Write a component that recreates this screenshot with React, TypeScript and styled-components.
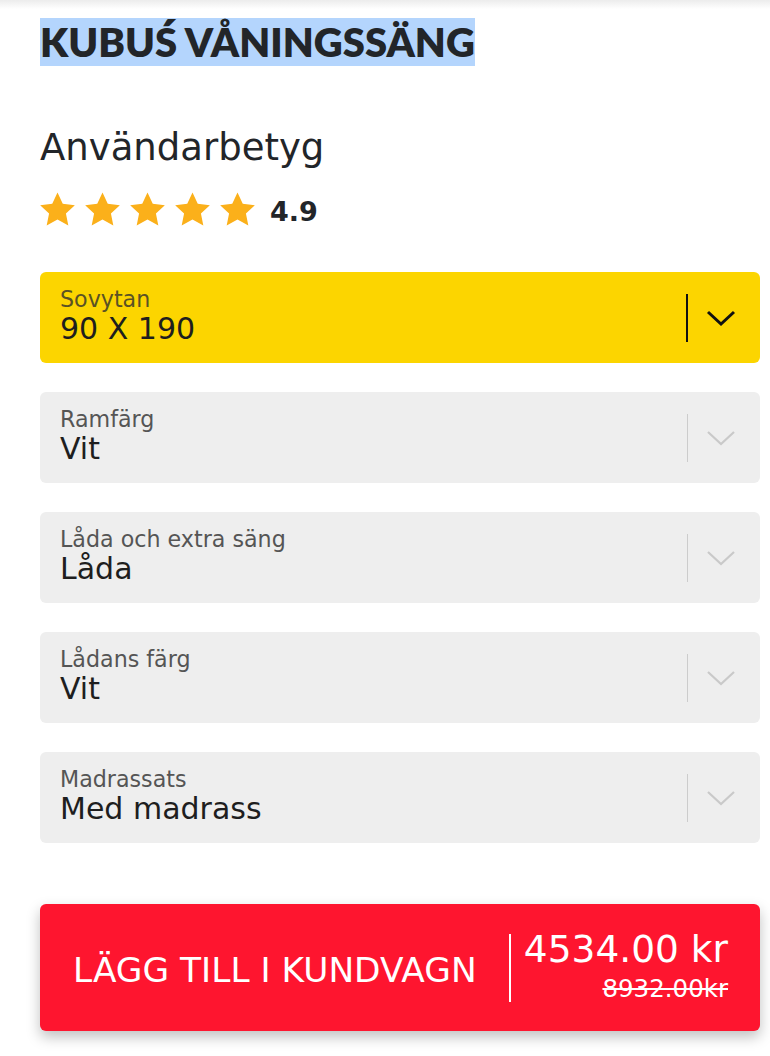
import React from 'react';
import styled, { createGlobalStyle } from 'styled-components';

const GlobalStyle = createGlobalStyle`
  body {
    margin: 0;
    background: #ffffff;
    font-family: 'DejaVu Sans', 'Lato', sans-serif;
    color: #222529;
  }
`;

const Page = styled.div`
  width: 770px;
  min-height: 1056px;
  background: linear-gradient(#ececec 0px, #ffffff 9px);
  padding: 18px 10px 0 40px;
  box-sizing: border-box;
`;

const Title = styled.h1`
  margin: 0;
  display: inline-block;
  background: #b4d5fd;
  font-family: 'Lato', 'DejaVu Sans', sans-serif;
  font-size: 40px;
  font-weight: 800;
  line-height: 48px;
  color: #222529;
`;

const Heading = styled.h2`
  margin: 58px 0 0;
  font-size: 37px;
  font-weight: 400;
  line-height: 48px;
  color: #222529;
`;

const RatingRow = styled.div`
  display: flex;
  align-items: center;
  margin-top: 18px;
`;

const Stars = styled.div`
  display: flex;
  gap: 10px;
`;

const Score = styled.span`
  margin: 6px 0 0 15px;
  font-size: 27px;
  font-weight: 700;
  color: #222529;
`;

const Options = styled.div`
  display: flex;
  flex-direction: column;
  gap: 29px;
  margin-top: 45px;
`;

const Select = styled.div<{ $active?: boolean }>`
  height: 91px;
  border-radius: 6px;
  background: ${(p) => (p.$active ? '#fcd500' : '#eeeeee')};
  display: flex;
  align-items: center;
  padding: 0 24px 0 20px;
`;

const SelectText = styled.div`
  flex: 1;
  display: flex;
  flex-direction: column;
  margin-top: -4px;
`;

const Label = styled.span<{ $active?: boolean }>`
  font-size: 22.2px;
  line-height: 26px;
  color: ${(p) => (p.$active ? '#5a5224' : '#555555')};
`;

const Value = styled.span`
  font-size: 30px;
  line-height: 34px;
  color: #1e1e1e;
`;

const Divider = styled.div<{ $active?: boolean }>`
  width: ${(p) => (p.$active ? '2px' : '1.5px')};
  height: 48px;
  background: ${(p) => (p.$active ? '#111111' : '#cccccc')};
  margin-right: 18px;
`;

const CartButton = styled.button`
  margin-top: 61px;
  width: 720px;
  height: 127px;
  border: none;
  border-radius: 6px;
  background: #fe152f;
  box-shadow: 0 6px 14px rgba(0, 0, 0, 0.25);
  display: flex;
  align-items: center;
  padding: 0 32px 0 33px;
  box-sizing: border-box;
  color: #ffffff;
  font-family: 'DejaVu Sans', 'Lato', sans-serif;
  cursor: pointer;
`;

const CartLabel = styled.span`
  font-size: 34.4px;
  font-weight: 400;
  white-space: nowrap;
  margin-top: 4px;
`;

const ButtonDivider = styled.div`
  width: 2px;
  height: 68px;
  background: #ffffff;
  margin: 0 10px 0 32px;
`;

const PriceBox = styled.div`
  display: flex;
  flex-direction: column;
  align-items: flex-end;
  flex: 1;
  margin-top: -4px;
`;

const Price = styled.span`
  font-size: 37.5px;
  line-height: 44px;
  font-weight: 400;
  white-space: nowrap;
`;

const OldPrice = styled.span`
  margin-top: 3px;
  font-size: 24.5px;
  line-height: 30px;
  text-decoration: line-through;
  text-decoration-thickness: 2px;
`;

const Star = () => (
  <svg width="35" height="34" viewBox="1 0.6 22 21">
    <path
      d="M12 0.8l3.3 7 7.6 0.9-5.6 5.2 1.5 7.6L12 17.7l-6.8 3.8 1.5-7.6L1.1 8.7l7.6-0.9z"
      fill="#fbb01a"
    />
  </svg>
);

const Chevron = ({ active }: { active?: boolean }) => (
  <svg width="30" height="18" viewBox="0 0 30 18">
    <polyline
      points="2,3 15,15 28,3"
      fill="none"
      stroke={active ? '#111111' : '#c9c9c9'}
      strokeWidth={active ? 3 : 2.2}
    />
  </svg>
);

const options = [
  { label: 'Sovytan', value: '90 X 190', active: true },
  { label: 'Ramfärg', value: 'Vit' },
  { label: 'Låda och extra säng', value: 'Låda' },
  { label: 'Lådans färg', value: 'Vit' },
  { label: 'Madrassats', value: 'Med madrass' },
];

export default function App() {
  return (
    <>
      <GlobalStyle />
      <Page>
        <Title>KUBUŚ VÅNINGSSÄNG</Title>
        <Heading>Användarbetyg</Heading>
        <RatingRow>
          <Stars>
            {[0, 1, 2, 3, 4].map((i) => (
              <Star key={i} />
            ))}
          </Stars>
          <Score>4.9</Score>
        </RatingRow>
        <Options>
          {options.map((o) => (
            <Select key={o.label} $active={o.active}>
              <SelectText>
                <Label $active={o.active}>{o.label}</Label>
                <Value>{o.value}</Value>
              </SelectText>
              <Divider $active={o.active} />
              <Chevron active={o.active} />
            </Select>
          ))}
        </Options>
        <CartButton>
          <CartLabel>LÄGG TILL I KUNDVAGN</CartLabel>
          <ButtonDivider />
          <PriceBox>
            <Price>4534.00 kr</Price>
            <OldPrice>8932.00kr</OldPrice>
          </PriceBox>
        </CartButton>
      </Page>
    </>
  );
}
